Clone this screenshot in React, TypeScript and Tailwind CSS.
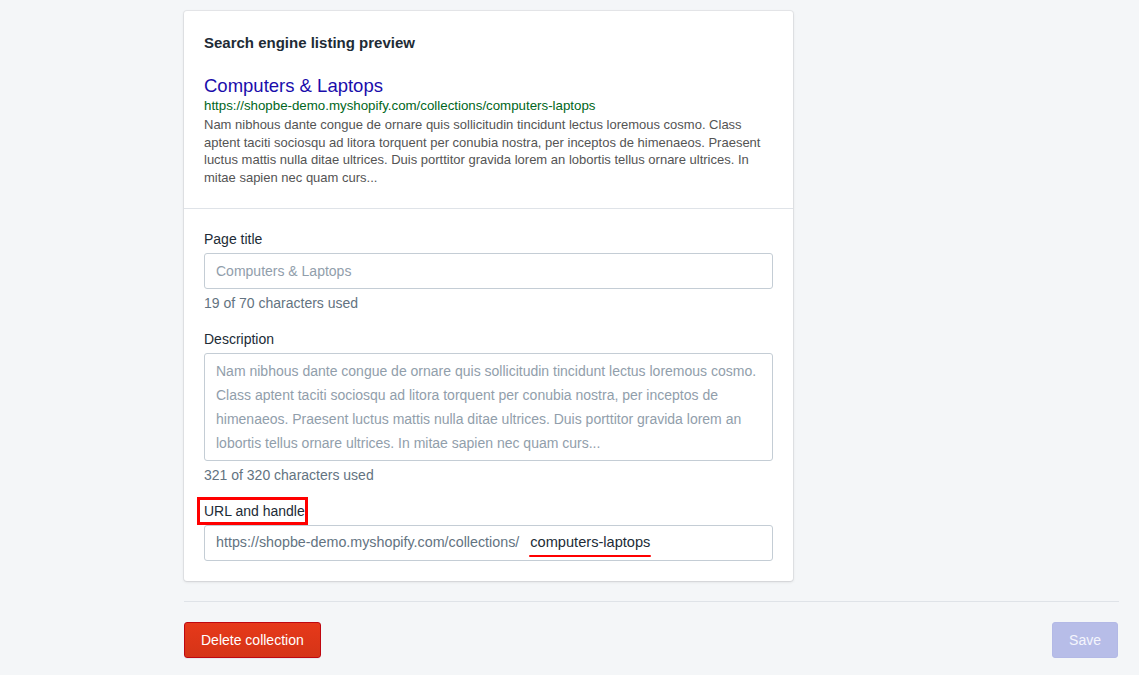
const font = { fontFamily: '"Liberation Sans", Arial, sans-serif' };

const descText = [
  "Nam nibhous dante congue de ornare quis sollicitudin tincidunt lectus loremous cosmo. Class",
  "aptent taciti sociosqu ad litora torquent per conubia nostra, per inceptos de himenaeos. Praesent",
  "luctus mattis nulla ditae ultrices. Duis porttitor gravida lorem an lobortis tellus ornare ultrices. In",
  "mitae sapien nec quam curs...",
];

const areaText = [
  "Nam nibhous dante congue de ornare quis sollicitudin tincidunt lectus loremous cosmo.",
  "Class aptent taciti sociosqu ad litora torquent per conubia nostra, per inceptos de",
  "himenaeos. Praesent luctus mattis nulla ditae ultrices. Duis porttitor gravida lorem an",
  "lobortis tellus ornare ultrices. In mitae sapien nec quam curs...",
];

function App() {
  return (
    <div
      className="min-h-[675px] bg-[#f4f6f8] pt-[11px] pb-[17px] text-[14px] text-[#212b36]"
      style={font}
    >
      <div className="ml-[184px] w-[935px]">
        {/* SEO card */}
        <div className="w-[609px] rounded-[3px] bg-white shadow-[0_0_0_1px_rgba(63,63,68,0.07),0_1px_3px_0_rgba(63,63,68,0.15)]">
          {/* preview */}
          <div className="px-5 pt-[22px] pb-[22px]">
            <h2 className="text-[15px] leading-5 font-bold text-[#212b36]">
              Search engine listing preview
            </h2>
            <div className="mt-[22px] text-[18.5px] leading-[21px] text-[#1a0dab]">
              Computers &amp; Laptops
            </div>
            <div className="text-[13.3px] leading-[19px] text-[#006621]">
              https://shopbe-demo.myshopify.com/collections/computers-laptops
            </div>
            <div className="mt-px text-[13px] leading-[17.5px] text-[#545454]">
              {descText.map((l) => (
                <div key={l}>{l}</div>
              ))}
            </div>
          </div>

          {/* fields */}
          <div className="border-t border-[#dfe3e8] px-5 pt-5 pb-5">
            <label className="block leading-5">Page title</label>
            <div className="mt-1 flex h-9 items-center rounded-[3px] border border-[#c4cdd5] px-[11px] text-[#919eab]">
              Computers &amp; Laptops
            </div>
            <div className="mt-1 leading-5 text-[#637381]">19 of 70 characters used</div>

            <label className="mt-4 block leading-5">Description</label>
            <div className="mt-1 rounded-[3px] border border-[#c4cdd5] px-[11px] py-[5px] leading-6 text-[#919eab]">
              {areaText.map((l) => (
                <div key={l}>{l}</div>
              ))}
            </div>
            <div className="mt-1 leading-5 text-[#637381]">321 of 320 characters used</div>

            <label className="relative mt-4 block w-fit leading-5">
              URL and handle
              <span className="pointer-events-none absolute -top-1 -right-[3px] -bottom-1 -left-[7px] border-[3px] border-[#ff0000]" />
            </label>
            <div className="mt-1 flex h-9 items-center rounded-[3px] border border-[#c4cdd5] px-[11px]">
              <span className="text-[14.3px] text-[#637381]">
                https://shopbe-demo.myshopify.com/collections/
              </span>
              <span className="relative ml-[11px] text-[14.6px] text-[#212b36]">
                computers-laptops
                <span className="absolute -left-px -right-px -bottom-[3px] h-[2px] rounded-full bg-[#ff0000]" />
              </span>
            </div>
          </div>
        </div>

        {/* footer actions */}
        <div className="mt-5 flex items-center justify-between border-t border-[#dfe3e8] pt-5">
          <button
            type="button"
            className="h-9 rounded-[3px] border border-[#bf0711] bg-gradient-to-b from-[#e6391a] to-[#d53417] px-4 text-[14px] text-white shadow-[0_1px_0_0_rgba(22,29,37,0.05)]"
          >
            Delete collection
          </button>
          <button
            type="button"
            className="mr-px h-9 rounded-[3px] border border-[#b3b9e6] bg-[#b7bde8] px-4 text-[14px] text-[#f4f5fd]"
          >
            Save
          </button>
        </div>
      </div>
    </div>
  );
}

export default App;
